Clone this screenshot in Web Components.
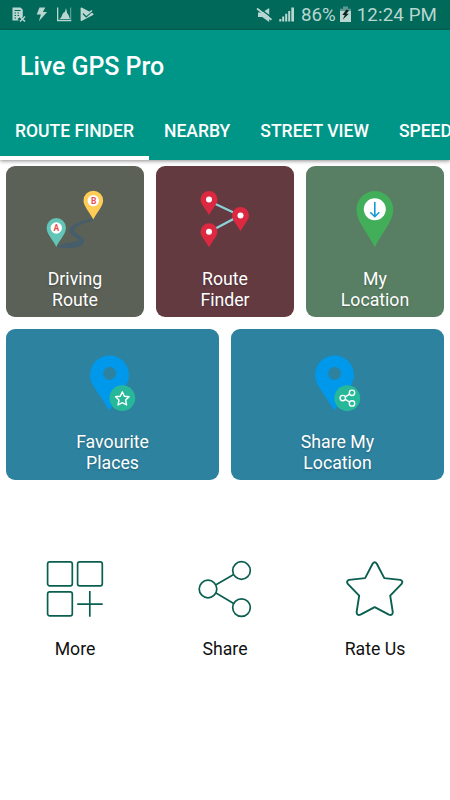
<!DOCTYPE html>
<html lang="en">
<head>
<meta charset="utf-8">
<meta name="viewport" content="width=device-width, initial-scale=1">
<title>Live GPS Pro</title>
<style>
    body {
        margin: 0;
        background: #fff;
        font-family: Roboto, sans-serif;
    }
</style>
</head>
<body>
<gps-app></gps-app>

<script>
const define = (name, html) => {
    const template = document.createElement('template');
    template.innerHTML = html;
    window.customElements.define(name, class extends HTMLElement {
        constructor() {
            super();
            this.attachShadow({ mode: 'open' });
            this.shadowRoot.appendChild(template.content.cloneNode(true));
        }
    });
};

// STATUS BAR
define('status-bar', `
<style>
    :host {
        display: flex;
        justify-content: space-between;
        height: 30px;
        background: #00695a;
        color: #b9d6d1;
        font-size: 18.7px;
        line-height: 31px;
        white-space: nowrap;
    }
    svg {
        display: block;
        height: 30px;
        fill: #b9d6d1;
    }
    .side {
        display: flex;
    }
    .right {
        padding-right: 13px;
    }
    .time {
        margin-left: 4px;
        letter-spacing: 0.12px;
    }
    .percent {
        margin-left: 5px;
        margin-right: 3px;
    }
</style>
<div class="side">
    <svg width="100" viewBox="0 0 100 30">
        <path d="M12.5 7.5h8l2.3 2.3v7l-2 1.6-1.4-1.2-1.7 1.7 1 1.6h-6.2z"/>
        <path d="M14.5 10.5h6M14.5 13h1.5M17.5 13h1.5M14.5 15.5h1.5M17.5 15.5h1.5M14.5 18h1.5" stroke="#00695a" stroke-width="1"/>
        <path d="M20 16.5l5 5M25 16.5l-5 5" stroke="#b9d6d1" stroke-width="1.5"/>
        <path d="M39.5 7.5h5.8l-2.4 4.5h4.2l-8.2 9.3 2-6.8h-4.2z"/>
        <path d="M57 7.5h1.3v12.3h13V21.3H57z"/>
        <path d="M59.3 19c2.7-1 3-6 4.5-6.5 1.2 0 1.6-2 2.2-4.5.8 3 .8 5 2 6.2 1.2 1 1.2 4 2.2 4.8z"/>
        <path d="M70.7 7.5v12" stroke="#b9d6d1" stroke-width=".6"/>
        <path d="M80.6 8.4q0-1 1-.8l11.5 5.8q1 .8 0 1.5l-11.5 6q-1 .3-1-.7z"/>
        <path d="M83 13.5l3.2 3.2 7-6.5" fill="none" stroke="#00695a" stroke-width="1.6"/>
        <path d="M83.5 12l3 3 5.5-4.500" fill="none" stroke="#b9d6d1" stroke-width="1.6"/>
    </svg>
</div>
<div class="side right">
    <svg width="40" viewBox="257 0 40 30">
        <path d="M259 12.5h4.2l7-4.5v14l-7-5H259z"/>
        <path d="M259.5 7.5l14.5 11" stroke="#00695a" stroke-width="1.5"/>
        <path d="M258 8.5l14.5 11.2" stroke="#b9d6d1" stroke-width="1.8"/>
        <path d="M280.3 19h2v2.5h-2zM283.2 16.5h2v5h-2zM286.2 13.8h2v7.7h-2zM289.2 11h2v10.5h-2zM292.3 7.5h2.7v14h-2.7z"/>
    </svg>
    <span class="percent">86%</span>
    <svg width="14" viewBox="339 0 14 30">
        <path fill="#5c9b92" d="M343 6.5h5v2.3h3V12h-11V8.8h3z"/>
        <path d="M340 11h11v11h-11z"/>
        <path fill="#082721" d="M346.5 9.5l-4.2 5.5h2.5l-2 4.5 6-5.8h-2.5l2.7-3.2z"/>
    </svg>
    <span class="time">12:24 PM</span>
</div>
`);

// TOOLBAR + TABS
define('app-header', `
<style>
    :host {
        display: flex;
        flex-direction: column;
        height: 130px;
        background: #009687;
        color: #fff;
        box-shadow: 0 1px 4px rgba(0, 0, 0, .45);
    }
    h1 {
        margin: 0;
        padding-left: 20px;
        font-size: 25px;
        font-weight: 500;
        letter-spacing: -0.05px;
        line-height: 73px;
        height: 72px;
    }
    nav {
        display: flex;
        height: 58px;
        overflow: hidden;
    }
</style>
<h1><slot name="title"></slot></h1>
<nav><slot></slot></nav>
`);

define('app-tab', `
<style>
    :host {
        display: block;
        flex: none;
        box-sizing: border-box;
        height: 58px;
        padding: 0 15px;
        font-size: 17.54px;
        font-weight: 500;
        line-height: 58px;
        white-space: nowrap;
    }
    :host([active]) {
        border-bottom: 4px solid #fff;
    }
</style>
<slot></slot>
`);

// CARDS
define('feature-tile', `
<style>
    :host {
        display: flex;
        flex: 1;
        flex-direction: column;
        align-items: center;
        box-sizing: border-box;
        height: 150.5px;
        padding-top: 24px;
        border-radius: 9px;
        background: var(--tile-color);
        color: #fff;
        font-size: 17.7px;
        line-height: 21px;
        text-align: center;
    }
    .label {
        width: 100px;
        margin-top: 20.5px;
        text-shadow: 0 1px 2px rgba(0, 0, 0, .25);
    }
</style>
<slot name="icon"></slot>
<div class="label"><slot></slot></div>
`);

define('action-button', `
<style>
    :host {
        display: flex;
        flex: 1;
        flex-direction: column;
        align-items: center;
        color: #111;
        font-size: 17.7px;
        line-height: 22px;
    }
    .label {
        margin-top: 20px;
    }
</style>
<slot name="icon"></slot>
<div class="label"><slot></slot></div>
`);

// ICONS, all on a 60x58 grid
const icons = {
    driving: `
        <path fill="#465d6b" d="M48 28.6C36 30.5 24.5 35.5 24.3 40.5c0 5 9.2 7 9 10-.3 2-10 .5-22 6 4 2 13 1.800 18 1 6-.8 10-3 9.700-7-.5-5-10-6.500-9.800-10 .2-3.500 8.500-7.500 19-10z"/>
        <path fill="#62c5b7" d="M11.3 57C8 50 1.6 44 1.6 37.8a9.7 9.7 0 0 1 19.4 0C21 44 14.6 50 11.3 57z"/>
        <path fill="#ffcd55" d="M48.3 29.5C45 22.5 38.5 16.5 38.5 10.5a9.8 9.8 0 0 1 19.6 0c0 6-6.5 12-9.8 19z"/>
        <circle cx="11.3" cy="38" r="5.7" fill="#fff"/>
        <circle cx="48.3" cy="10.6" r="5.7" fill="#fff"/>
        <text x="11.3" y="41" text-anchor="middle" font-size="8.5" font-weight="700" fill="#e9504e">A</text>
        <text x="48.6" y="13.7" text-anchor="middle" font-size="8.5" font-weight="700" fill="#e9504e">B</text>`,
    finder: `
        <path d="M14 11l31 14.5L14 42" fill="none" stroke="#8cd3dc" stroke-width="2.2"/>
        <g fill="#dc2841">
            <path d="M14 25C11 19 5.5 14 5.5 9.5a8.5 8.5 0 0 1 17 0C22.5 14 17 19 14 25z"/>
            <path d="M45.5 41.2c-3-6-8.5-11-8.5-15.7a8.5 8.5 0 0 1 17 0c0 4.7-5.5 9.7-8.5 15.7z"/>
            <path d="M14 57.3c-3-6-8.5-11-8.5-15.6a8.5 8.5 0 0 1 17 0c0 4.6-5.5 9.6-8.5 15.6z"/>
        </g>
        <g fill="#fff"><circle cx="14" cy="9.6" r="3"/><circle cx="45.5" cy="25.4" r="3"/><circle cx="14" cy="41.7" r="3"/></g>`,
    location: `
        <path fill="#42ae59" d="M29.8 57.2C24 44.5 11.4 32 11.4 19.5a18.4 18.4 0 0 1 36.8 0c0 12.5-12.6 25-18.4 37.7z"/>
        <circle cx="29.8" cy="19.3" r="11" fill="#fff"/>
        <path d="M29.8 12v14.5M25.3 22.3l4.5 4.4 4.5-4.4" fill="none" stroke="#1698d8" stroke-width="1.6"/>`,
    place: `
        <path fill="#0098eb" fill-rule="evenodd" d="M26.4 57.5L10.6 33.5C8.1 29 7.1 26 7.1 21.8a19.4 19.4 0 0 1 38.8 0c0 4.2-1 7.2-3.5 11.7zM26.6 14a6.4 6.4 0 1 0 .01 0z"/>
        <circle cx="39.3" cy="45.1" r="12.9" fill="#27b899"/>`,
    more: `
        <g fill="none" stroke="#0b5f50" stroke-width="1.7">
            <rect x="2.6" y="1.9" width="24.7" height="24" rx="2.2"/>
            <rect x="32.6" y="1.9" width="24.7" height="24" rx="2.2"/>
            <rect x="2.6" y="31.9" width="24.7" height="24" rx="2.2"/>
            <path d="M44.8 31v25.7M32.2 44.2h25.5"/>
        </g>`,
    share: `
        <g fill="none" stroke="#0b5f50" stroke-width="1.7">
            <circle cx="13" cy="29" r="8.8"/>
            <circle cx="46.5" cy="10.5" r="8.8"/>
            <circle cx="46.5" cy="47.6" r="8.8"/>
            <path d="M21 24.7l17.7-10.2M21 33l17.7 10.5"/>
        </g>`,
    rate: `
        <path fill="none" stroke="#0b5f50" stroke-width="1.9" stroke-linejoin="round" d="M27.6 3.8Q29.7.8 31.8 3.8L39.3 18.1 55.4 19.9Q58.7 21.2 56.4 24.2L45.2 35.7 47.8 52.2Q47.4 55.9 43.9 54.7L29.7 47.2 15.500 54.7Q12 55.9 11.6 52.2L14.2 35.7 3 24.2Q.7 21.2 4 19.9L20.1 18.1Z"/>`
};
icons.favourite = icons.place + `
    <path fill="none" stroke="#fff" stroke-width="1.4" stroke-linejoin="round" d="M39.3 38.8l2 4.400 4.800.5-3.500 3.300 1 5-4.300-2.300-4.300 2.300 1-5-3.500-3.300 4.800-.5z"/>`;
icons.shareplace = icons.place + `
    <g fill="none" stroke="#fff" stroke-width="1.4">
        <circle cx="34.8" cy="45.1" r="2.7"/><circle cx="44" cy="39.8" r="2.7"/><circle cx="44" cy="50.4" r="2.7"/>
        <path d="M37.2 43.8l4.400-2.600M37.2 46.4l4.400 2.600"/>
    </g>`;

class GpsIcon extends HTMLElement {
    constructor() {
        super();
        this.attachShadow({ mode: 'open' });
    }

    connectedCallback() {
        this.shadowRoot.innerHTML = `
        <style>
            :host { display: block; width: 60px; height: 58px; }
            svg { display: block; overflow: visible; }
        </style>
        <svg width="60" height="58" viewBox="0 0 60 58">${icons[this.getAttribute('name')]}</svg>`;
    }
}
window.customElements.define('gps-icon', GpsIcon);

// PAGE
define('gps-app', `
<style>
    :host {
        display: flex;
        flex-direction: column;
        height: 800px;
        overflow: hidden;
    }
    .row {
        display: flex;
        gap: 12.5px;
        padding: 0 6.25px;
    }
    .first {
        padding-top: 6.3px;
    }
    .second {
        padding-top: 12.5px;
    }
    .actions {
        display: flex;
        padding-top: 80.2px;
    }
</style>
<status-bar></status-bar>
<app-header>
    <span slot="title">Live GPS Pro</span>
    <app-tab active>ROUTE FINDER</app-tab>
    <app-tab>NEARBY</app-tab>
    <app-tab>STREET VIEW</app-tab>
    <app-tab>SPEEDOMETER</app-tab>
</app-header>
<div class="row first">
    <feature-tile style="--tile-color: #5b6156"><gps-icon slot="icon" name="driving"></gps-icon>Driving<br>Route</feature-tile>
    <feature-tile style="--tile-color: #643a41"><gps-icon slot="icon" name="finder"></gps-icon>Route<br>Finder</feature-tile>
    <feature-tile style="--tile-color: #587f63"><gps-icon slot="icon" name="location"></gps-icon>My<br>Location</feature-tile>
</div>
<div class="row second">
    <feature-tile style="--tile-color: #2d829f"><gps-icon slot="icon" name="favourite"></gps-icon>Favourite<br>Places</feature-tile>
    <feature-tile style="--tile-color: #2d829f"><gps-icon slot="icon" name="shareplace"></gps-icon>Share My<br>Location</feature-tile>
</div>
<div class="actions">
    <action-button><gps-icon slot="icon" name="more"></gps-icon>More</action-button>
    <action-button><gps-icon slot="icon" name="share"></gps-icon>Share</action-button>
    <action-button><gps-icon slot="icon" name="rate"></gps-icon>Rate Us</action-button>
</div>
`);
</script>
</body>
</html>
